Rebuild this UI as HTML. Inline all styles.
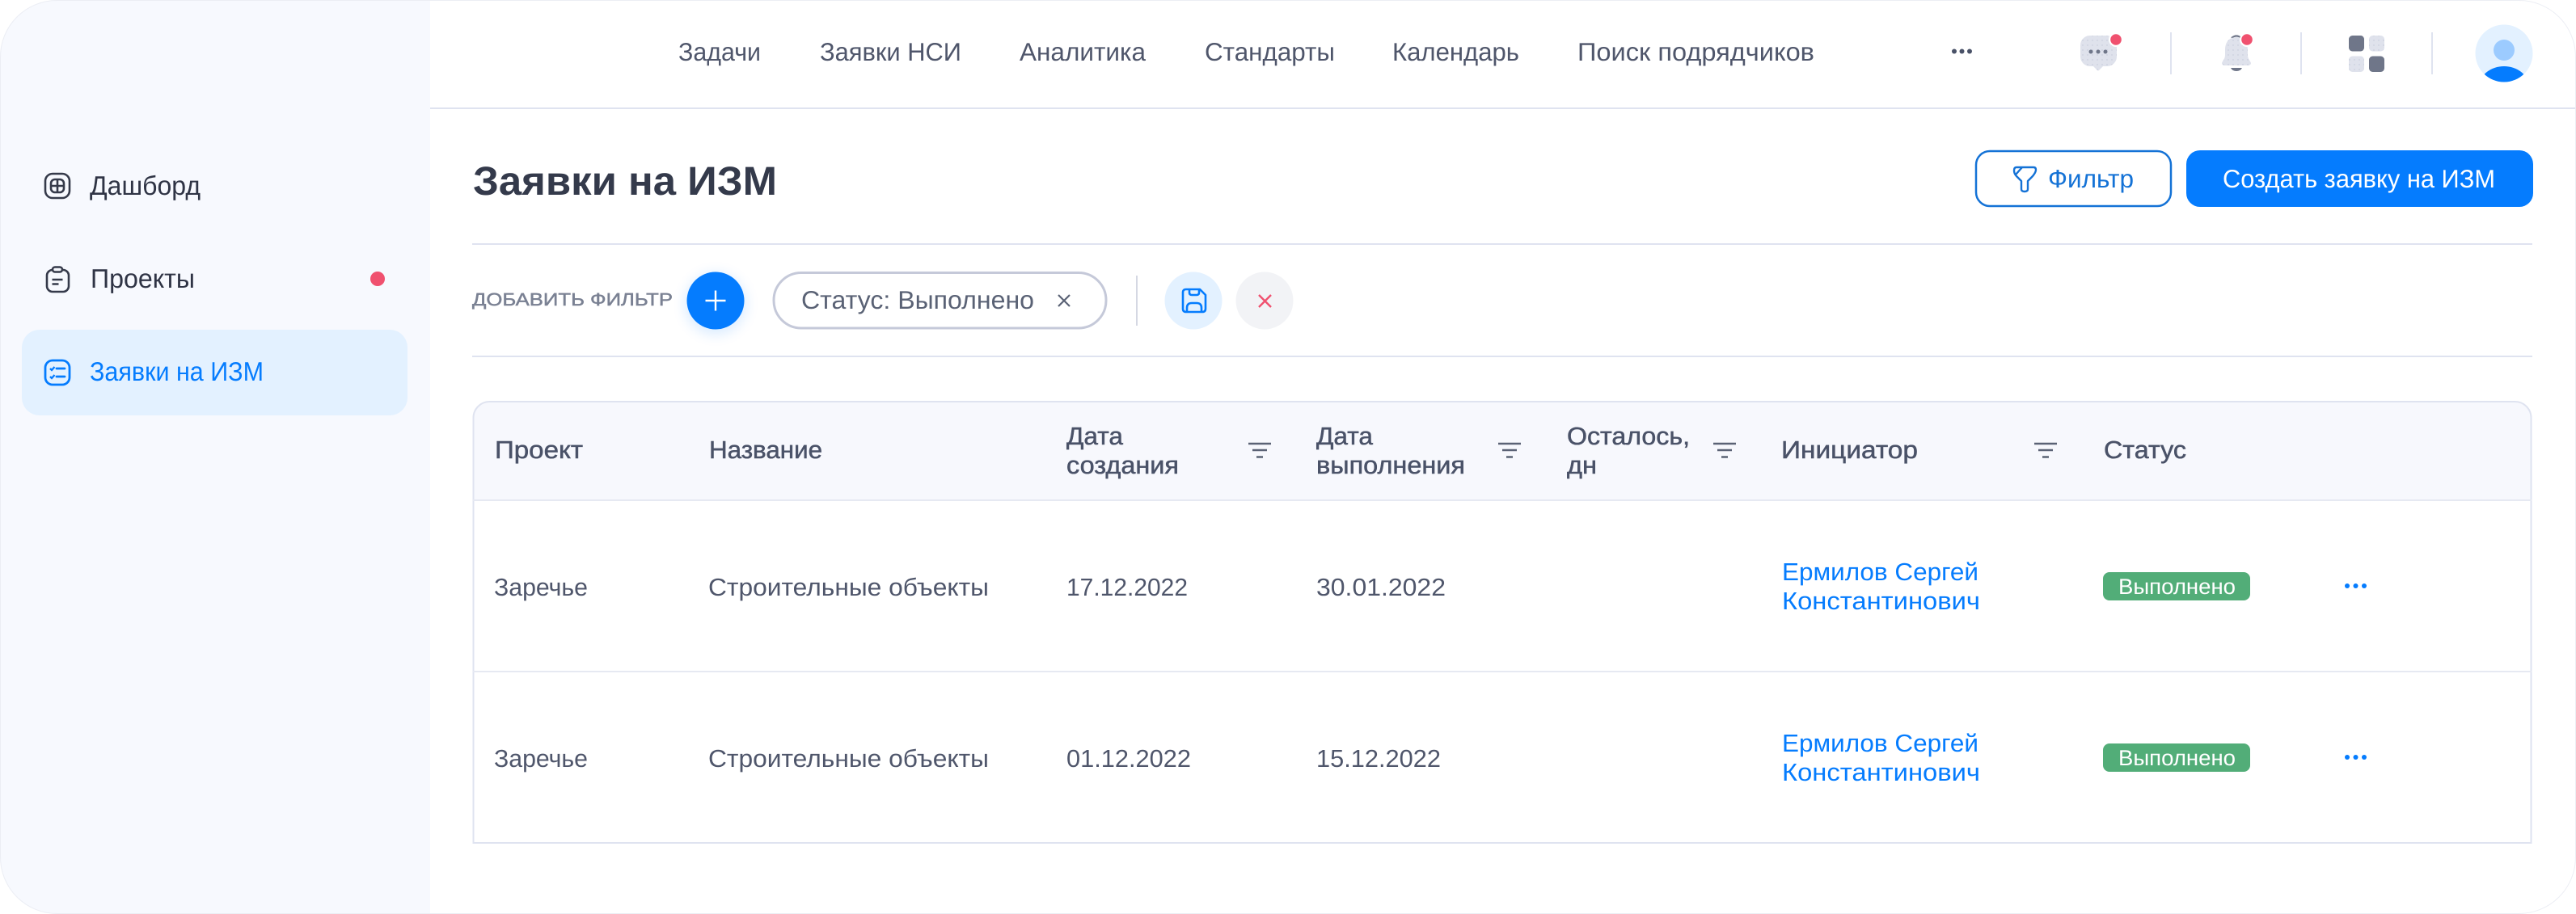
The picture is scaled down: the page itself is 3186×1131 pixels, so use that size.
<!DOCTYPE html>
<html lang="ru">
<head>
<meta charset="utf-8">
<title>Заявки на ИЗМ</title>
<style>
html,body{margin:0;padding:0;background:#fff;width:3186px;height:1131px;overflow:hidden}
svg{display:block}
text{font-family:"Liberation Sans","DejaVu Sans",sans-serif;text-rendering:geometricPrecision;white-space:pre}
.nav{font-size:31.500px;fill:#4f566b}
.side{font-size:33px;fill:#2f3445}
.th{font-size:30.500px;fill:#4a5268;stroke:#4a5268;stroke-width:.5px}
.td{font-size:30.500px;fill:#4f566b}
.lnk{font-size:30.500px;fill:#057cfe}
.bd{font-size:27px;fill:#fff}
.fl{stroke:#5a6275;stroke-width:2.5;fill:none}
</style>
</head>
<body>
<svg width="3186" height="1131" viewBox="0 0 3186 1131" xmlns="http://www.w3.org/2000/svg">
  <defs>
    <clipPath id="page"><rect x="0" y="0" width="3186" height="1131" rx="70" ry="70"/></clipPath>
    <clipPath id="av"><circle cx="3097" cy="66" r="35.5"/></clipPath>
    <filter id="sh" x="-50%" y="-50%" width="200%" height="200%"><feGaussianBlur stdDeviation="8"/></filter>
    <pattern id="dots" width="6" height="6" patternUnits="userSpaceOnUse">
      <rect width="6" height="6" fill="#dfe2ec"/><circle cx="2" cy="2" r=".7" fill="#c3c8d8"/>
    </pattern>
  </defs>

  <rect width="3186" height="1131" fill="#fff"/>
  <g clip-path="url(#page)">
    <rect x="0" y="0" width="532" height="1131" fill="#f7f9fe"/>
    <rect x="532" y="133" width="2654" height="2" fill="#dfe3f0"/>
  </g>
  <rect x=".5" y=".5" width="3185" height="1130" rx="70" ry="70" fill="none" stroke="#eceef4" stroke-width="1"/>

  <!-- sidebar -->
  <rect x="27" y="408" width="477" height="106" rx="22" fill="#e3f1ff"/>
  <g fill="none" stroke="#353a4a" stroke-width="2.6">
    <rect x="56" y="215" width="30" height="30" rx="9"/>
    <rect x="63" y="222" width="16" height="16" rx="5"/>
    <path d="M71 222v16M63 230h16"/>
    <rect x="58" y="334" width="27" height="27" rx="7"/>
    <rect x="65" y="330.5" width="12" height="6" rx="3" fill="#f7f9fe"/>
    <path d="M64.500 346h13M64.500 351.500h8"/>
  </g>
  <g fill="none" stroke="#057cfe" stroke-width="2.8">
    <rect x="56" y="446" width="30" height="30" rx="9"/>
    <path d="M70 456h10M70 466h10" stroke-linecap="round"/>
    <path d="M62 456l2 2 3.500-4M62 466l2 2 3.500-4" stroke-width="2.300"/>
  </g>
  <text class="side" x="111" y="241" textLength="137" lengthAdjust="spacingAndGlyphs">Дашборд</text>
  <text class="side" x="112" y="356" textLength="129" lengthAdjust="spacingAndGlyphs">Проекты</text>
  <text class="side" x="111" y="471" textLength="215" lengthAdjust="spacingAndGlyphs" style="fill:#057cfe">Заявки на ИЗМ</text>
  <circle cx="467" cy="345" r="9" fill="#f0516f"/>

  <!-- top nav -->
  <text class="nav" x="839" y="75" textLength="102" lengthAdjust="spacingAndGlyphs">Задачи</text>
  <text class="nav" x="1014" y="75" textLength="175" lengthAdjust="spacingAndGlyphs">Заявки НСИ</text>
  <text class="nav" x="1261" y="75" textLength="156" lengthAdjust="spacingAndGlyphs">Аналитика</text>
  <text class="nav" x="1490" y="75" textLength="161" lengthAdjust="spacingAndGlyphs">Стандарты</text>
  <text class="nav" x="1722" y="75" textLength="157" lengthAdjust="spacingAndGlyphs">Календарь</text>
  <text class="nav" x="1951" y="75" textLength="293" lengthAdjust="spacingAndGlyphs">Поиск подрядчиков</text>
  <g fill="#4a5268"><circle cx="2417" cy="63.500" r="3"/><circle cx="2426.500" cy="63.500" r="3"/><circle cx="2436" cy="63.500" r="3"/></g>

  <!-- chat icon -->
  <path d="M2585 44h21a12 12 0 0 1 12 12v14a12 12 0 0 1-12 12h-5l-5 5q-1 1-2 0l-5-5h-4a12 12 0 0 1-12-12V56a12 12 0 0 1 12-12z" fill="url(#dots)"/>
  <g fill="#6f7689"><circle cx="2586" cy="64" r="2.500"/><circle cx="2595" cy="64" r="2.500"/><circle cx="2604" cy="64" r="2.500"/></g>
  <circle cx="2617" cy="49" r="9" fill="#fff"/><circle cx="2617" cy="49" r="6.800" fill="#f0516f"/>
  <rect x="2684" y="40" width="2" height="52" fill="#dfe3f0"/>

  <!-- bell icon -->
  <path d="M2760 47q6-5 12 0" fill="none" stroke="#6f7689" stroke-width="2.200"/>
  <path d="M2766 46c-10 0-14 7-14 16v6c0 5-3 7-4 10 0 2 2 3 4 3h28c2 0 4-1 4-3-1-3-4-5-4-10v-6c0-9-4-16-14-16z" fill="url(#dots)"/>
  <path d="M2759 84h14q-2 4-7 4t-7-4z" fill="#6f7689"/>
  <circle cx="2779" cy="49" r="9" fill="#fff"/><circle cx="2779" cy="49" r="6.800" fill="#f0516f"/>
  <rect x="2845" y="40" width="2" height="52" fill="#dfe3f0"/>

  <!-- apps icon -->
  <rect x="2905" y="44" width="19" height="19.500" rx="4.500" fill="#6f7689"/>
  <rect x="2930" y="44" width="19" height="19.500" rx="4.500" fill="url(#dots)"/>
  <rect x="2905" y="69.500" width="19" height="19.500" rx="4.500" fill="url(#dots)"/>
  <rect x="2930" y="69.500" width="19" height="19.500" rx="4.500" fill="#6f7689"/>
  <rect x="3007" y="40" width="2" height="52" fill="#dfe3f0"/>

  <!-- avatar -->
  <circle cx="3097" cy="66" r="35.500" fill="#e3f1ff"/>
  <circle cx="3097" cy="62" r="13" fill="#9ccbff"/>
  <g clip-path="url(#av)"><ellipse cx="3097" cy="106" rx="30" ry="24" fill="#057cfe"/></g>

  <!-- title & buttons -->
  <text x="585" y="241" textLength="376" lengthAdjust="spacingAndGlyphs" style="font-size:50px;font-weight:700;fill:#343a4b">Заявки на ИЗМ</text>
  <rect x="2444" y="187" width="241" height="68" rx="17" fill="#fff" stroke="#1472d6" stroke-width="2.500"/>
  <path d="M2494 207h21q3 0 3 3c0 3-3 7-5 9l-5 5v10q0 3-4 3t-4-3v-10l-6-6c-2-2-3-5-3-7q0-4 3-4zM2501 207l-8 9" fill="none" stroke="#1472d6" stroke-width="2.400" stroke-linejoin="round"/>
  <text x="2533" y="232" textLength="106" lengthAdjust="spacingAndGlyphs" style="font-size:31.500px;fill:#1472d6">Фильтр</text>
  <rect x="2704" y="186" width="429" height="70" rx="17" fill="#057cfe"/>
  <text x="2749" y="232" textLength="337" lengthAdjust="spacingAndGlyphs" style="font-size:31.500px;fill:#fff">Создать заявку на ИЗМ</text>

  <rect x="584" y="301" width="2548" height="2" fill="#dfe3f0"/>
  <rect x="584" y="440" width="2548" height="2" fill="#dfe3f0"/>

  <!-- filter row -->
  <text x="584" y="378" textLength="248" lengthAdjust="spacingAndGlyphs" style="font-size:22px;fill:#7a8193;stroke:#7a8193;stroke-width:.5px">ДОБАВИТЬ ФИЛЬТР</text>
  <circle cx="885" cy="376" r="38" fill="#057cfe" opacity=".14" filter="url(#sh)"/>
  <circle cx="885" cy="372" r="35.500" fill="#057cfe"/>
  <path d="M885 359.500v25M872.500 372h25" stroke="#fff" stroke-width="2.400" fill="none"/>
  <rect x="957" y="337.500" width="411" height="68.500" rx="34" fill="#fff" stroke="#c5c9d9" stroke-width="3"/>
  <text x="991" y="382" textLength="288" lengthAdjust="spacingAndGlyphs" style="font-size:31.500px;fill:#5a6275">Статус: Выполнено</text>
  <path d="M1309 365l14 14M1323 365l-14 14" stroke="#5a6275" stroke-width="2.200" fill="none"/>
  <rect x="1405" y="341" width="2" height="62" fill="#d5d8e3"/>
  <circle cx="1476" cy="372" r="35.500" fill="#e3f1ff"/>
  <path d="M1467 358h17l7 7v17q0 4-4 4h-20q-4 0-4-4v-20q0-4 4-4zM1471 358v4q0 3 3 3h6q3 0 3-3v-4M1468 386v-5q0-6 6-6h6q6 0 6 6v5" fill="none" stroke="#057cfe" stroke-width="2.600" stroke-linejoin="round"/>
  <circle cx="1564" cy="372" r="35.500" fill="#f2f3f6"/>
  <path d="M1557 365l15 15M1572 365l-15 15" stroke="#f0516f" stroke-width="2.400" fill="none"/>

  <!-- table -->
  <path d="M585 618V517a20 20 0 0 1 20-20H3111a20 20 0 0 1 20 20V618z" fill="#f7f8fd"/>
  <path d="M585.500 1043V517a20 20 0 0 1 20-20H3110.500a20 20 0 0 1 20 20V1043z" fill="none" stroke="#dfe3f0" stroke-width="2"/>
  <rect x="585" y="618" width="2546" height="2" fill="#e6e9f2"/>
  <rect x="585" y="830" width="2546" height="2" fill="#e6e9f2"/>

  <text class="th" x="612" y="567" textLength="109" lengthAdjust="spacingAndGlyphs">Проект</text>
  <text class="th" x="877" y="567" textLength="140" lengthAdjust="spacingAndGlyphs">Название</text>
  <text class="th" x="1319" y="550" textLength="70" lengthAdjust="spacingAndGlyphs">Дата</text>
  <text class="th" x="1319" y="586" textLength="139" lengthAdjust="spacingAndGlyphs">создания</text>
  <text class="th" x="1628" y="550" textLength="70" lengthAdjust="spacingAndGlyphs">Дата</text>
  <text class="th" x="1628" y="586" textLength="184" lengthAdjust="spacingAndGlyphs">выполнения</text>
  <text class="th" x="1938" y="550" textLength="152" lengthAdjust="spacingAndGlyphs">Осталось,</text>
  <text class="th" x="1938" y="586" textLength="37" lengthAdjust="spacingAndGlyphs">дн</text>
  <text class="th" x="2203" y="567" textLength="169" lengthAdjust="spacingAndGlyphs">Инициатор</text>
  <text class="th" x="2602" y="567" textLength="102" lengthAdjust="spacingAndGlyphs">Статус</text>

  <path class="fl" d="M1544 549h28M1549 557h18M1554 565.500h8"/>
  <path class="fl" d="M1853 549h28M1858 557h18M1863 565.500h8"/>
  <path class="fl" d="M2119 549h28M2124 557h18M2129 565.500h8"/>
  <path class="fl" d="M2516 549h28M2521 557h18M2526 565.500h8"/>

  <!-- row 1 -->
  <text class="td" x="611" y="737" textLength="116" lengthAdjust="spacingAndGlyphs">Заречье</text>
  <text class="td" x="876" y="737" textLength="347" lengthAdjust="spacingAndGlyphs">Строительные объекты</text>
  <text class="td" x="1319" y="737" textLength="150" lengthAdjust="spacingAndGlyphs">17.12.2022</text>
  <text class="td" x="1628" y="737" textLength="160" lengthAdjust="spacingAndGlyphs">30.01.2022</text>
  <text class="lnk" x="2204" y="718" textLength="243" lengthAdjust="spacingAndGlyphs">Ермилов Сергей</text>
  <text class="lnk" x="2204" y="754" textLength="245" lengthAdjust="spacingAndGlyphs">Константинович</text>
  <rect x="2601" y="708" width="182" height="35" rx="8" fill="#52ad78"/>
  <text class="bd" x="2620" y="735" textLength="145" lengthAdjust="spacingAndGlyphs">Выполнено</text>
  <g fill="#057cfe"><circle cx="2903" cy="725" r="3"/><circle cx="2913.500" cy="725" r="3"/><circle cx="2924" cy="725" r="3"/></g>

  <!-- row 2 -->
  <text class="td" x="611" y="949" textLength="116" lengthAdjust="spacingAndGlyphs">Заречье</text>
  <text class="td" x="876" y="949" textLength="347" lengthAdjust="spacingAndGlyphs">Строительные объекты</text>
  <text class="td" x="1319" y="949" textLength="154" lengthAdjust="spacingAndGlyphs">01.12.2022</text>
  <text class="td" x="1628" y="949" textLength="154" lengthAdjust="spacingAndGlyphs">15.12.2022</text>
  <text class="lnk" x="2204" y="930" textLength="243" lengthAdjust="spacingAndGlyphs">Ермилов Сергей</text>
  <text class="lnk" x="2204" y="966" textLength="245" lengthAdjust="spacingAndGlyphs">Константинович</text>
  <rect x="2601" y="920" width="182" height="35" rx="8" fill="#52ad78"/>
  <text class="bd" x="2620" y="947" textLength="145" lengthAdjust="spacingAndGlyphs">Выполнено</text>
  <g fill="#057cfe"><circle cx="2903" cy="937" r="3"/><circle cx="2913.500" cy="937" r="3"/><circle cx="2924" cy="937" r="3"/></g>
</svg>
</body>
</html>
